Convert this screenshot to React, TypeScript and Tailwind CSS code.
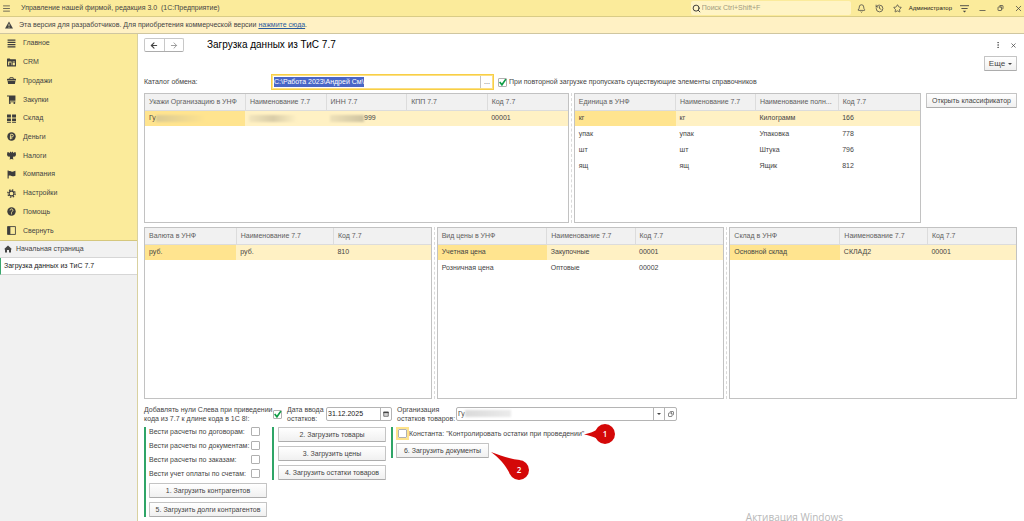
import { useEffect, useRef, useState } from "react";
import type { ComponentType, ReactNode } from "react";
import clsx from "clsx";
import {
  ArrowLeft,
  ArrowRight,
  Bell,
  Copy,
  EllipsisVertical,
  History,
  Menu,
  Minus,
  Search,
  Star,
  X,
} from "lucide-react";

type IconProps = { className?: string };

function GlavnoeIcon({ className }: IconProps) {
  return (
    <svg viewBox="0 0 16 16" className={className} fill="currentColor">
      <path d="M1 1h14v2H1zM1 5h14v2H1zM1 9h14v2H1zM1 13h14v2H1z" />
    </svg>
  );
}

function CrmIcon({ className }: IconProps) {
  return (
    <svg viewBox="0 0 16 16" className={className} fill="currentColor">
      <path
        fillRule="evenodd"
        d="M1 1h4l1 1h9a1 1 0 0 1 1 1v11a1 1 0 0 1-1 1H1a1 1 0 0 1-1-1V2a1 1 0 0 1 1-1zm1 5v7h2V8h3v5h1V6zm8 0v2h4V6zm0 3v4h4V9z"
      />
    </svg>
  );
}

function BasketIcon({ className }: IconProps) {
  return (
    <svg viewBox="0 0 16 16" className={className} fill="currentColor">
      <path
        fillRule="evenodd"
        d="M5 2h6l1 3h3a1 1 0 0 1 1 1v2H0V6a1 1 0 0 1 1-1h3zm1 1.500L5.500 5h5L10 3.500zM1 9h14l-1 5H2z"
      />
    </svg>
  );
}

function CartIcon({ className }: IconProps) {
  return (
    <svg viewBox="0 0 16 16" className={className} fill="currentColor">
      <path d="M0 1h15v9H5v1.500h10V13H3.500V2.500H0z" />
      <circle cx="5" cy="14.300" r="1.700" />
      <circle cx="13" cy="14.300" r="1.700" />
    </svg>
  );
}

function StockIcon({ className }: IconProps) {
  return (
    <svg viewBox="0 0 16 16" className={className} fill="currentColor">
      <path d="M0 1h7v5H0zM9 1h7v5H9zM0 8h7v5H0zM9 8h7v5H9zM0 14h7v1.500H0zM9 14h7v1.500H9z" />
    </svg>
  );
}

function RubleIcon({ className }: IconProps) {
  return (
    <svg viewBox="0 0 16 16" className={className}>
      <circle cx="8" cy="8" r="7.500" fill="currentColor" />
      <path
        d="M6.500 13V4h2.300a2.300 2.300 0 0 1 0 4.800H5M5 11h4.500"
        fill="none"
        stroke="#fbec9e"
        strokeWidth="1.500"
      />
    </svg>
  );
}

function EagleIcon({ className }: IconProps) {
  return (
    <svg viewBox="0 0 16 16" className={className} fill="currentColor">
      <path d="M8 3l1.500-2 1.500 1-.5 2L13 2h2.500L16 7l-2 3-2-.5L10.500 12l1 3L8 14l-3.500 1 1-3L4 9.500 2 10 0 7l.5-5H3l2.500 2L5 2l1.500-1z" />
    </svg>
  );
}

function FlagIcon({ className }: IconProps) {
  return (
    <svg viewBox="0 0 16 16" className={className} fill="currentColor">
      <path d="M1 1h2v1c3-1 4 1.500 6.500 1S13 2 15 1.500V10c-2 .5-3 1-5.500 1S6 9 3 10v5H1z" />
    </svg>
  );
}

function GearIcon({ className }: IconProps) {
  return (
    <svg viewBox="0 0 16 16" className={className} fill="none" stroke="currentColor">
      <circle cx="8" cy="8" r="4.300" strokeWidth="2" />
      <circle cx="8" cy="8" r="6.500" strokeWidth="2.400" strokeDasharray="2.550 2.550" />
    </svg>
  );
}

function HelpIcon({ className }: IconProps) {
  return (
    <svg viewBox="0 0 16 16" className={className}>
      <circle cx="8" cy="8" r="7.500" fill="currentColor" />
      <path
        d="M5.500 6a2.500 2.500 0 1 1 3.800 2.100C8.300 8.700 8 9 8 10M8 11.200v1.800"
        fill="none"
        stroke="#fbec9e"
        strokeWidth="1.700"
      />
    </svg>
  );
}

function CollapseIcon({ className }: IconProps) {
  return (
    <svg viewBox="0 0 16 16" className={className}>
      <path d="M1 1h14v14H1z" fill="none" stroke="currentColor" strokeWidth="1.500" />
      <path d="M1 1h5v14H1z" fill="currentColor" />
    </svg>
  );
}

function HomeIcon({ className }: IconProps) {
  return (
    <svg viewBox="0 0 16 16" className={className} fill="currentColor">
      <path d="M8 1l8 7.500h-2V15h-4v-5H6v5H2V8.500H0z" />
    </svg>
  );
}

function WarningIcon({ className }: IconProps) {
  return (
    <svg viewBox="0 0 16 16" className={className}>
      <path d="M8 1l8 14H0z" fill="currentColor" />
      <path d="M8 5.500v5M8 11.700v1.800" stroke="#fff1c4" strokeWidth="1.600" />
    </svg>
  );
}

function FilterIcon({ className }: IconProps) {
  return (
    <svg viewBox="0 0 16 16" className={className}>
      <path d="M0 3h16M2.500 8h11" stroke="currentColor" strokeWidth="1.600" />
      <path d="M5 12h6l-3 3z" fill="currentColor" />
    </svg>
  );
}

function CalendarIcon({ className }: IconProps) {
  return (
    <svg viewBox="0 0 16 16" className={className}>
      <path d="M2 3h12v11H2z" fill="none" stroke="currentColor" strokeWidth="2" />
      <path d="M1 2h14v4H1z" fill="currentColor" />
      <path d="M4 8.500h8M4 11h8" stroke="currentColor" strokeWidth="1" strokeDasharray="2 1" />
    </svg>
  );
}

function Caret({ className }: IconProps) {
  return (
    <svg viewBox="0 0 8 4" className={clsx("h-[2px] w-1", className)} fill="currentColor">
      <path d="M0 0h8L4 4z" />
    </svg>
  );
}

const sections: { label: string; icon: ComponentType<IconProps> }[] = [
  { label: "Главное", icon: GlavnoeIcon },
  { label: "CRM", icon: CrmIcon },
  { label: "Продажи", icon: BasketIcon },
  { label: "Закупки", icon: CartIcon },
  { label: "Склад", icon: StockIcon },
  { label: "Деньги", icon: RubleIcon },
  { label: "Налоги", icon: EagleIcon },
  { label: "Компания", icon: FlagIcon },
  { label: "Настройки", icon: GearIcon },
  { label: "Помощь", icon: HelpIcon },
  { label: "Свернуть", icon: CollapseIcon },
];

function Smudge({ className }: { className: string }) {
  return (
    <span
      className={clsx("inline-block h-[7px] bg-linear-to-r align-middle blur-[1px]", className)}
    />
  );
}

type Column = { title: string; width: number };

function DataTable({
  columns,
  rows,
  className,
}: {
  columns: Column[];
  rows: ReactNode[][];
  className?: string;
}) {
  const total = columns.reduce((sum, c) => sum + c.width, 0);
  return (
    <div className={clsx("min-w-0 border border-[#c2c2c2] bg-white", className)}>
      <table className="w-full table-fixed border-collapse text-left">
        <colgroup>
          {columns.map((c) => (
            <col key={c.title} style={{ width: `${(c.width / total) * 100}%` }} />
          ))}
        </colgroup>
        <thead>
          <tr className="h-4 bg-[#f1f1f1] text-[#606060]">
            {columns.map((c) => (
              <th
                key={c.title}
                scope="col"
                className="truncate border-r border-b border-[#dcdcdc] px-1 font-normal last:border-r-0"
              >
                {c.title}
              </th>
            ))}
          </tr>
        </thead>
        <tbody>
          {rows.map((row, i) => (
            <tr key={i} className={clsx("h-4", i === 0 && "bg-[#fff1c4]")}>
              {row.map((cell, j) => (
                <td
                  key={j}
                  className={clsx("truncate px-1", i === 0 && j === 0 && "bg-[#ffe48f]")}
                >
                  {cell}
                </td>
              ))}
            </tr>
          ))}
        </tbody>
      </table>
    </div>
  );
}

function Splitter() {
  return <div className="mx-[2px] w-px border-l border-dashed border-[#dadada]" />;
}

function Checkbox({ id, defaultChecked }: { id: string; defaultChecked?: boolean }) {
  return (
    <span className="relative inline-flex h-[9px] w-[9px] shrink-0">
      <input
        id={id}
        type="checkbox"
        defaultChecked={defaultChecked}
        className="peer h-[9px] w-[9px] appearance-none rounded-[1px] border border-[#b0b0b0] bg-white"
      />
      <svg
        viewBox="0 0 16 16"
        className="pointer-events-none absolute inset-0 hidden h-[9px] w-[9px] text-[#0f9d47] peer-checked:block"
        fill="none"
        stroke="currentColor"
        strokeWidth="3"
      >
        <path d="M3 7l4 5 7-10" />
      </svg>
    </span>
  );
}

function ActionButton({ children, className }: { children: ReactNode; className?: string }) {
  return (
    <button
      type="button"
      className={clsx(
        "h-[15px] rounded-[1px] border border-[#c4c4c4] border-b-[#acacac] bg-linear-to-b from-white to-[#f0f0f0] text-center leading-[12px] whitespace-nowrap",
        className,
      )}
    >
      {children}
    </button>
  );
}

function TitleBar() {
  return (
    <header className="flex h-[17px] items-center border-b border-[#d9cc86] bg-[#fbeb9b] pr-px pl-[2px]">
      <button type="button" aria-label="Меню" className="mr-[10px]">
        <Menu className="h-[9px] w-[9px]" strokeWidth={2} />
      </button>
      <h1 className="flex-1 whitespace-pre">
        Управление нашей фирмой, редакция 3.0{"  "}(1С:Предприятие)
      </h1>
      <label className="flex h-[14px] w-[160px] items-center rounded-[2px] bg-[#fff4c5] pl-px">
        <Search className="h-[9px] w-[9px] text-[#333]" strokeWidth={2.5} />
        <input
          type="search"
          aria-label="Поиск"
          placeholder="Поиск Ctrl+Shift+F"
          className="min-w-0 flex-1 pl-px outline-none placeholder:text-[#a09a80]"
        />
      </label>
      <div className="ml-[6px] flex items-center gap-[9px]">
        <button type="button" aria-label="Уведомления">
          <Bell className="h-[9px] w-[9px]" strokeWidth={2} />
        </button>
        <button type="button" aria-label="История">
          <History className="h-[9px] w-[9px]" strokeWidth={2} />
        </button>
        <button type="button" aria-label="Избранное">
          <Star className="h-[9px] w-[9px]" strokeWidth={2} />
        </button>
      </div>
      <span className="ml-[7px] text-[6px] text-[#202020]">Администратор</span>
      <div className="ml-[8px] flex items-center gap-[9px]">
        <button type="button" aria-label="Настройка панели">
          <FilterIcon className="h-[9px] w-[9px]" />
        </button>
        <button type="button" aria-label="Свернуть окно" className="pt-1">
          <Minus className="h-[9px] w-[9px]" strokeWidth={2} />
        </button>
        <button type="button" aria-label="Развернуть окно">
          <Copy className="h-[6px] w-[9px] -scale-x-100" strokeWidth={3} />
        </button>
        <button type="button" aria-label="Закрыть окно">
          <X className="h-[9px] w-[9px]" strokeWidth={2} />
        </button>
      </div>
    </header>
  );
}

function Sidebar() {
  return (
    <aside className="flex w-[138px] shrink-0 flex-col border-r border-[#d9d1a0] bg-[#f1f1f1]">
      <nav className="grid h-[207px] auto-rows-fr border-b border-[#d5c77d] bg-[#fbeb9b]">
        {sections.map(({ label, icon: Icon }) => (
          <a key={label} href="#" className="flex items-center gap-[7px] pl-[7px]">
            <Icon className="h-[9px] w-[9px] text-[#3d3d3d]" />
            {label}
          </a>
        ))}
      </nav>
      <a href="#" className="flex h-[17px] items-center gap-1 border-b border-[#d6d6d6] pl-[4px]">
        <HomeIcon className="h-[8px] w-[8px]" />
        Начальная страница
      </a>
      <a
        href="#"
        aria-current="page"
        className="flex h-[17px] items-center border-b border-l border-b-[#d6d6d6] border-l-[#3aa76d] bg-white pl-[3px] text-[#202020]"
      >
        Загрузка данных из ТиС 7.7
      </a>
    </aside>
  );
}

function PathField() {
  const [path, setPath] = useState("C:\\Работа 2023\\Андрей См\\");
  const ref = useRef<HTMLInputElement>(null);

  useEffect(() => {
    ref.current?.focus();
    ref.current?.select();
  }, []);

  return (
    <div className="flex h-[16px] w-[223px] border border-[#f8cf45] bg-white ring-1 ring-[#fbdf85] ring-inset">
      <input
        ref={ref}
        id="exchange-dir"
        value={path}
        onChange={(e) => setPath(e.target.value)}
        className="min-w-0 flex-1 pl-[2px] outline-none selection:bg-[#4966c6] selection:text-white"
      />
      <button
        type="button"
        aria-label="Выбрать каталог"
        className="my-px w-[13px] border-l border-[#c4c4c4] leading-[8px]"
      >
        ...
      </button>
    </div>
  );
}

function PointerRight() {
  return (
    <svg
      viewBox="0 0 32 20"
      className="pointer-events-none absolute top-1/2 left-full h-5 w-8 -translate-y-1/2"
    >
      <path d="M0 10.500C8 9 13 6 17 3V17C13 14 8 12 0 10.500z" fill="#d40808" />
      <circle cx="21" cy="10" r="10" fill="#d40808" />
      <text
        x="21"
        y="13"
        textAnchor="middle"
        fontSize="8"
        fontWeight="600"
        fill="#fff"
        fontFamily="Open Sans, sans-serif"
      >
        1
      </text>
    </svg>
  );
}

function PointerDown() {
  return (
    <svg
      viewBox="0 0 38 28"
      className="pointer-events-none absolute top-[9px] left-full ml-[2px] h-7 w-[38px]"
    >
      <path d="M0 0C10 4 20 7 29 8L19 22C14 12 8 6 0 0z" fill="#d40808" />
      <circle cx="28" cy="18" r="10" fill="#d40808" />
      <text
        x="28"
        y="21"
        textAnchor="middle"
        fontSize="8"
        fontWeight="600"
        fill="#fff"
        fontFamily="Open Sans, sans-serif"
      >
        2
      </text>
    </svg>
  );
}

const settlementOptions = [
  { id: "by-contracts", label: "Вести расчеты по договорам:" },
  { id: "by-documents", label: "Вести расчеты по документам:" },
  { id: "by-orders", label: "Вести расчеты по заказам:" },
  { id: "by-invoices", label: "Вести учет оплаты по счетам:" },
];

function LoadPanel() {
  return (
    <section className="mt-[6px]">
      <div className="flex items-center">
        <label htmlFor="leading-zeros" className="w-[129px] leading-[9px]">
          Добавлять нули Слева при приведении
          <br />
          кода из 7.7 к длине кода в 1С 8!:
        </label>
        <Checkbox id="leading-zeros" defaultChecked />
        <label htmlFor="rest-date" className="ml-[5px] w-[39px] leading-[9px]">
          Дата ввода
          <br />
          остатков:
        </label>
        <div className="flex h-[14px] w-[66px] rounded-[2px] border border-[#b4b4b4]">
          <input
            id="rest-date"
            defaultValue="31.12.2025"
            className="min-w-0 flex-1 pl-px text-[#202020] outline-none"
          />
          <button
            type="button"
            aria-label="Открыть календарь"
            className="flex w-[11px] items-center justify-center border-l border-[#b4b4b4]"
          >
            <CalendarIcon className="h-[6px] w-[6px]" />
          </button>
        </div>
        <label htmlFor="rest-org" className="ml-[5px] w-[59px] leading-[9px]">
          Организация
          <br />
          остатков товаров:
        </label>
        <div className="flex h-[14px] w-[221px] rounded-[2px] border border-[#b4b4b4]">
          <div className="relative flex min-w-0 flex-1">
            <select id="rest-org" className="w-full appearance-none pl-px outline-none">
              <option>Гу</option>
            </select>
            <Smudge className="pointer-events-none absolute top-[2px] left-[8px] w-[46px] from-[#dadada] to-[#ebebeb]" />
            <span className="pointer-events-none absolute inset-y-0 right-0 flex w-[11px] items-center justify-center border-l border-[#b4b4b4]">
              <Caret />
            </span>
          </div>
          <button
            type="button"
            aria-label="Открыть организацию"
            className="flex w-[12px] items-center justify-center border-l border-[#b4b4b4]"
          >
            <Copy className="h-[6px] w-[6px] -scale-x-100" strokeWidth={2.5} />
          </button>
        </div>
      </div>

      <div className="mt-[4px] flex items-start gap-[5px]">
        <div className="flex w-[123px] flex-col border-l-2 border-[#2fa567] pl-[3px]">
          {settlementOptions.map(({ id, label }) => (
            <div key={id} className="flex h-[14px] items-start pr-[7px]">
              <label htmlFor={id} className="flex-1">
                {label}
              </label>
              <Checkbox id={id} />
            </div>
          ))}
          <ActionButton className="w-full">1. Загрузить контрагентов</ActionButton>
          <ActionButton className="mt-[4px] w-full">5. Загрузить долги контрагентов</ActionButton>
        </div>
        <div className="flex w-[114px] flex-col gap-[4px] border-l-2 border-[#2fa567] pl-[4px]">
          <ActionButton>2. Загрузить товары</ActionButton>
          <ActionButton>3. Загрузить цены</ActionButton>
          <ActionButton>4. Загрузить остатки товаров</ActionButton>
        </div>
        <div className="flex flex-col items-start gap-[3px] border-l-2 border-[#2fa567] pl-[3px]">
          <div className="relative flex items-center">
            <span className="flex border-2 border-[#fde38b]">
              <Checkbox id="control-rest" />
            </span>
            <label htmlFor="control-rest" className="whitespace-nowrap">
              Константа: "Контролировать остатки при проведении"
            </label>
            <PointerRight />
          </div>
          <div className="relative flex">
            <ActionButton className="w-[93px]">6. Загрузить документы</ActionButton>
            <PointerDown />
          </div>
        </div>
      </div>
    </section>
  );
}

export default function App() {
  return (
    <div className="relative flex min-h-screen flex-col overflow-hidden bg-white font-['Liberation_Sans',Arial,sans-serif] text-[7px] leading-[10px] text-[#444]">
      <TitleBar />
      <div className="flex h-[17px] items-center border-b border-[#cfc6a0] bg-[#fff1c4] pl-[5px]">
        <WarningIcon className="mr-[6px] h-[8px] w-[8px]" />
        <p>
          Эта версия для разработчиков. Для приобретения коммерческой версии{" "}
          <a href="#" className="text-[#2b5c9e] underline">
            нажмите сюда
          </a>
          .
        </p>
      </div>

      <div className="flex flex-1">
        <Sidebar />
        <main className="flex min-w-0 flex-1 flex-col pt-[4px] pr-[7px] pl-[6px]">
          <div className="flex h-[14px] items-center">
            <div className="flex h-[14px] w-[40px] rounded-[2px] border border-[#c8c8c8] border-b-[#acacac]">
              <button type="button" aria-label="Назад" className="flex flex-1 items-center justify-center">
                <ArrowLeft className="h-[9px] w-[10px]" strokeWidth={3} />
              </button>
              <button
                type="button"
                aria-label="Вперед"
                className="flex flex-1 items-center justify-center border-l border-[#c8c8c8] text-[#9a9a9a]"
              >
                <ArrowRight className="h-[9px] w-[10px]" strokeWidth={2.5} />
              </button>
            </div>
            <h2 className="ml-[23px] flex-1 text-[10px] text-black">Загрузка данных из ТиС 7.7</h2>
            <div className="flex items-center gap-[8px]">
              <button type="button" aria-label="Дополнительно">
                <EllipsisVertical className="h-[8px] w-[8px]" strokeWidth={2} />
              </button>
              <button type="button" aria-label="Закрыть">
                <X className="h-[7px] w-[7px]" strokeWidth={2.5} />
              </button>
            </div>
          </div>

          <div className="mt-[4px] flex justify-end">
            <ActionButton className="flex w-[33px] items-center justify-center gap-[3px] text-[8px]">
              Еще
              <Caret />
            </ActionButton>
          </div>

          <div className="mt-[3px] flex items-center">
            <label htmlFor="exchange-dir" className="w-[127px]">
              Каталог обмена:
            </label>
            <PathField />
            <div className="ml-[4px] flex items-center gap-[2px]">
              <Checkbox id="skip-existing" defaultChecked />
              <label htmlFor="skip-existing">
                При повторной загрузке пропускать существующие элементы справочников
              </label>
            </div>
          </div>

          <div className="mt-[3px] flex h-[130px]">
            <DataTable
              className="flex-[425]"
              columns={[
                { title: "Укажи Организацию в УНФ", width: 101 },
                { title: "Наименование 7.7", width: 81 },
                { title: "ИНН 7.7", width: 81 },
                { title: "КПП 7.7", width: 81 },
                { title: "Код 7.7", width: 81 },
              ]}
              rows={[
                [
                  <>
                    Гу
                    <Smudge className="w-[50px] from-[#dccb93] to-[#ffe48f]" />
                  </>,
                  <Smudge className="w-[48px] from-[#f3e6bd] via-[#d9cda8] to-[#fff1c4]" />,
                  <>
                    <Smudge className="w-[34px] from-[#efe2b9] to-[#cfc4a1]" />
                    999
                  </>,
                  "",
                  "00001",
                ],
              ]}
            />
            <Splitter />
            <DataTable
              className="flex-[347]"
              columns={[
                { title: "Единица в УНФ", width: 101 },
                { title: "Наименование 7.7", width: 80 },
                { title: "Наименование полн...", width: 83 },
                { title: "Код 7.7", width: 82 },
              ]}
              rows={[
                ["кг", "кг", "Килограмм", "166"],
                ["упак", "упак", "Упаковка", "778"],
                ["шт", "шт", "Штука", "796"],
                ["ящ", "ящ", "Ящик", "812"],
              ]}
            />
            <ActionButton className="ml-[5px] w-[91px]">Открыть классификатор</ActionButton>
          </div>

          <div className="mt-[4px] flex h-[172px]">
            <DataTable
              className="flex-1"
              columns={[
                { title: "Валюта в УНФ", width: 92 },
                { title: "Наименование 7.7", width: 98 },
                { title: "Код 7.7", width: 98 },
              ]}
              rows={[["руб.", "руб.", "810"]]}
            />
            <Splitter />
            <DataTable
              className="flex-1"
              columns={[
                { title: "Вид цены в УНФ", width: 110 },
                { title: "Наименование 7.7", width: 89 },
                { title: "Код 7.7", width: 89 },
              ]}
              rows={[
                ["Учетная цена", "Закупочные", "00001"],
                ["Розничная цена", "Оптовые", "00002"],
              ]}
            />
            <Splitter />
            <DataTable
              className="flex-1"
              columns={[
                { title: "Склад в УНФ", width: 110 },
                { title: "Наименование 7.7", width: 88 },
                { title: "Код 7.7", width: 89 },
              ]}
              rows={[["Основной склад", "СКЛАД2", "00001"]]}
            />
          </div>

          <LoadPanel />
        </main>
      </div>

      <div className="pointer-events-none absolute right-[181px] bottom-0 font-['Open_Sans',sans-serif] text-[10px] leading-[8px] text-[#b8b8b8]">
        Активация Windows
      </div>
    </div>
  );
}
